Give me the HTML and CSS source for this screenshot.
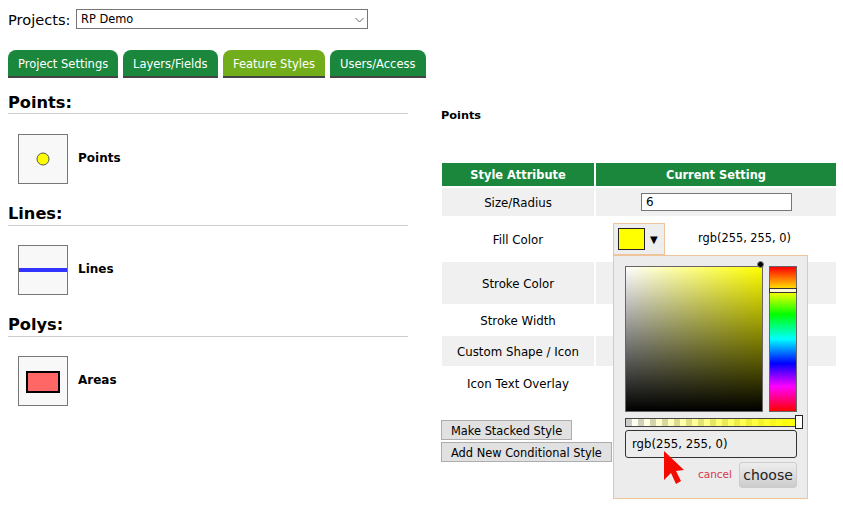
FILE: index.html
```html
<!DOCTYPE html>
<html lang="en">
<head>
<meta charset="utf-8">
<title>Feature Styles</title>
<link rel="stylesheet" href="styles.css">
</head>
<body>
<div class="project-row">
  <label class="project-label" for="project">Projects:</label>
  <div class="select-wrap">
    <select id="project" class="project-select"><option>RP Demo</option></select>
    <svg class="select-arrow" width="9" height="6" viewBox="0 0 9 6"><path d="M0.5 1 L4.5 5 L8.5 1" fill="none" stroke="#666" stroke-width="1"/></svg>
  </div>
</div>
<nav class="tabs">
  <a class="tab">Project Settings</a>
  <a class="tab">Layers/Fields</a>
  <a class="tab tab-active">Feature Styles</a>
  <a class="tab">Users/Access</a>
</nav>
<main class="columns">
  <section class="left">
    <h3 class="group-title">Points:</h3>
    <div class="item">
      <div class="thumb"><svg width="48" height="48" viewBox="0 0 48 48"><circle cx="24" cy="24" r="6" fill="#ffff00" stroke="#555" stroke-width="1"/></svg></div>
      <span class="item-label">Points</span>
    </div>
    <h3 class="group-title">Lines:</h3>
    <div class="item">
      <div class="thumb"><svg width="48" height="48" viewBox="0 0 48 48"><line x1="0" y1="24" x2="48" y2="24" stroke="#3333ff" stroke-width="4"/></svg></div>
      <span class="item-label">Lines</span>
    </div>
    <h3 class="group-title">Polys:</h3>
    <div class="item">
      <div class="thumb"><svg width="48" height="48" viewBox="0 0 48 48"><rect x="8" y="15" width="32" height="20" fill="#ff6666" stroke="#000" stroke-width="2"/></svg></div>
      <span class="item-label">Areas</span>
    </div>
  </section>
  <section class="right">
    <h4 class="style-title">Points</h4>
    <table class="attrs">
      <thead><tr><th class="col-a">Style Attribute</th><th class="col-b">Current Setting</th></tr></thead>
      <tbody>
        <tr class="r28"><td>Size/Radius</td><td><input class="size-input" value="6"></td></tr>
        <tr class="r42"><td>Fill Color</td><td class="fill-cell">
          <div class="fill-wrap">
            <div class="replacer"><span class="swatch"></span><span class="caret">▼</span></div>
            <span class="fill-value">rgb(255, 255, 0)</span>
            <div class="picker">
              <div class="picker-top">
                <div class="spectrum"><span class="spectrum-dot"></span></div>
                <div class="hue"><span class="hue-handle"></span></div>
              </div>
              <div class="alpha"><span class="alpha-handle"></span></div>
              <div class="rgb-input">rgb(255, 255, 0)</div>
              <div class="picker-actions"><a class="cancel">cancel</a><button class="choose">choose</button></div>
              <svg class="cursor" width="24" height="36" viewBox="0 0 24 36"><polygon points="1,0 1,29 8,22 13,33 18,30 13,20 21,19" fill="#f40a00"/></svg>
            </div>
          </div>
        </td></tr>
        <tr class="r42"><td>Stroke Color</td><td></td></tr>
        <tr class="r28"><td>Stroke Width</td><td></td></tr>
        <tr class="r30"><td>Custom Shape / Icon</td><td></td></tr>
        <tr class="r30"><td>Icon Text Overlay</td><td></td></tr>
      </tbody>
    </table>
    <div class="actions">
      <button class="btn">Make Stacked Style</button>
      <button class="btn">Add New Conditional Style</button>
    </div>
  </section>
</main>
</body>
</html>
```
FILE: styles.css
```css
* { box-sizing: border-box; }
html, body { margin: 0; padding: 0; }
body {
  width: 843px;
  height: 527px;
  overflow: hidden;
  padding: 9px 0 0 8px;
  background: #fff;
  color: #000;
  font: 11.8px "DejaVu Sans", Verdana, sans-serif;
}
.project-row { display: flex; align-items: center; gap: 5px; height: 20px; }
.project-label { width: 63px; font-size: 14.6px; white-space: nowrap; }
.select-wrap { position: relative; width: 292px; height: 20px; }
.project-select {
  appearance: none;
  display: block;
  width: 292px;
  height: 20px;
  padding: 0 0 0 4px;
  font: 11.4px "DejaVu Sans", sans-serif;
  color: #000;
  background: #fff;
  border: 1px solid #767676;
  border-radius: 0;
}
.select-arrow { position: absolute; left: 279px; top: 8px; }
.tabs { display: flex; gap: 5px; margin-top: 21px; height: 28px; }
.tab {
  display: block;
  height: 28px;
  padding: 7px 10px 0;
  font-size: 11.5px;
  color: #fff;
  background: #1a873c;
  border-bottom: 2px solid #444;
  border-radius: 8px 8px 0 0;
  white-space: nowrap;
}
.tab:nth-child(1) { width: 110px; }
.tab:nth-child(2) { width: 95px; }
.tab:nth-child(3) { width: 102px; }
.tab:nth-child(4) { width: 96px; }
.tab-active { background: #72ae1c; }
.columns { display: flex; }
.left { width: 400px; margin-top: 13px; }
.group-title {
  margin: 0;
  height: 23px;
  font-size: 16.2px;
  line-height: 24px;
  font-weight: bold;
  border-bottom: 1px solid #ccc;
}
.item + .group-title { line-height: 22px; }
.item { display: flex; align-items: center; padding: 19px 0 19px 10px; gap: 10px; }
.item:nth-child(2) { padding-top: 20px; }
.thumb {
  width: 50px;
  height: 50px;
  border: 1px solid #777;
  background: #f8f8f8;
}
.thumb svg { display: block; }
.item-label { font-size: 12px; font-weight: bold; margin-top: -2px; }
.item:nth-child(2) .item-label { margin-top: -3px; }
.right { margin-left: 32px; position: relative; }
.style-title { margin: 30px 0 0 1px; height: 15px; font-size: 11.3px; line-height: 15px; font-weight: bold; }
.attrs { margin-top: 38px; border-collapse: separate; border-spacing: 2px; table-layout: fixed; width: 398px; }
.col-a { width: 152px; }
.col-b { width: 240px; }
.attrs th { height: 23px; padding: 1px 0 0; background: #1a873c; color: #fff; font-size: 11.4px; }
.attrs td { padding: 0; text-align: center; }
.attrs td:first-child { padding-top: 2px; }
.attrs tbody tr:nth-child(odd) td { background: #f0f0f0; }
.attrs tbody tr:nth-child(even) td { background: #fff; }
.r28 td { height: 28px; }
.r30 td { height: 30px; }
.r42 td { height: 42px; }
.size-input {
  display: block;
  width: 151px;
  height: 18px;
  margin: 0 0 0 45px;
  padding: 0 1px 0 4px;
  font: 12px "DejaVu Sans", sans-serif;
  border: 1px solid #767676;
}
.attrs .fill-cell { text-align: left; vertical-align: top; }
.fill-wrap { position: relative; display: flex; align-items: center; height: 42px; padding-left: 17px; }
.replacer {
  display: flex;
  align-items: center;
  width: 52px;
  height: 32px;
  padding-left: 4px;
  background: #eee;
  border: 1px solid #f0c49b;
}
.swatch { width: 27px; height: 22px; background: #ff0; border: 1px solid #222; }
.caret { margin-left: 5px; font-size: 10px; }
.fill-value { margin-left: 33px; margin-top: -3px; font-size: 11.4px; }
.picker {
  position: absolute;
  left: 17px;
  top: 37px;
  width: 195px;
  height: 244px;
  padding: 10px 10px 0 11px;
  background: #ececec;
  border: 1px solid #f0c49b;
}
.picker-top { display: flex; gap: 6px; }
.spectrum {
  position: relative;
  width: 138px;
  height: 146px;
  border: 1px solid #666;
  background: linear-gradient(to top, #000, rgba(0,0,0,0)), linear-gradient(to right, #fff, #ff0);
}
.spectrum-dot {
  position: absolute;
  right: -2px;
  top: -6px;
  width: 7px;
  height: 7px;
  border-radius: 50%;
  background: #000;
  border: 1px solid #888;
}
.hue {
  position: relative;
  width: 28px;
  height: 146px;
  border: 1px solid #666;
  background: linear-gradient(to bottom, #f00 0%, #ff0 17%, #0f0 33%, #0ff 50%, #00f 67%, #f0f 83%, #f00 100%);
}
.hue-handle {
  position: absolute;
  left: -1px;
  right: -1px;
  top: 21px;
  height: 5px;
  background: #fff8d0;
  border: 1px solid #333;
}
.alpha {
  position: relative;
  width: 174px;
  height: 9px;
  margin-top: 6px;
  border: 1px solid #444;
  background:
    linear-gradient(to right, rgba(255,255,0,0), #ff0),
    repeating-linear-gradient(to right, #ccc 0 6px, #fff 6px 12px);
}
.alpha-handle {
  position: absolute;
  right: -5px;
  top: -4px;
  width: 8px;
  height: 14px;
  background: #fff;
  border: 1px solid #222;
}
.rgb-input {
  width: 172px;
  height: 28px;
  margin-top: 3px;
  padding-left: 6px;
  line-height: 26px;
  font-size: 11.7px;
  border: 1px solid #333;
  border-radius: 3px;
}
.picker-actions { display: flex; align-items: center; justify-content: flex-end; gap: 7px; width: 172px; margin-top: 4px; }
.cancel { color: #d7384f; font-size: 10.5px; margin-top: -2px; }
.choose {
  width: 58px;
  height: 26px;
  padding: 0;
  color: #222;
  font: 14px "DejaVu Sans", sans-serif;
  background: linear-gradient(#eee, #ccc);
  border: 1px solid #ccc;
  border-radius: 3px;
}
.cursor { position: absolute; left: 49px; top: 195px; }
.actions { display: flex; flex-direction: column; align-items: flex-start; gap: 2px; margin: 20px 0 0 1px; }
.btn {
  height: 20px;
  padding: 1px 9px 0;
  font: 11.4px "DejaVu Sans", sans-serif;
  color: #000;
  background: #e1e1e1;
  border: 1px solid #adadad;
}
```
